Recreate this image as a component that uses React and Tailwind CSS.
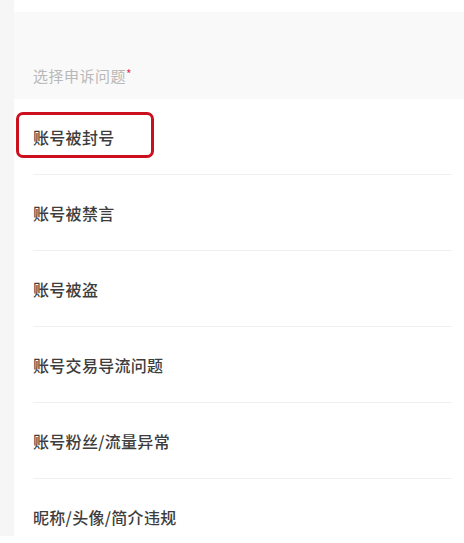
export default function App() {
  const items = [
    "账号被封号",
    "账号被禁言",
    "账号被盗",
    "账号交易导流问题",
    "账号粉丝/流量异常",
    "昵称/头像/简介违规",
  ];
  return (
    <div
      className="w-[464px] h-[543px] overflow-hidden flex bg-white"
      style={{ fontFamily: '"Noto Sans CJK SC", "Noto Sans", sans-serif' }}
    >
      <div className="w-[14px] h-[536px] bg-[#f6f6f6] shrink-0" />
      <div className="flex-1 flex flex-col">
        <div className="h-[12px] shrink-0 bg-white" />
        <div className="h-[87px] shrink-0 bg-[#f9f9f9] pl-[19px] flex items-end pb-[11px]">
          <span className="text-[15px] leading-[22px] text-[#b8b8b8] tracking-[0.5px]">
            选择申诉问题<span className="text-[#e8335a] relative -top-[3px] text-[12px]">*</span>
          </span>
        </div>
        <div className="flex flex-col shrink-0 bg-white">
          {items.map((t, i) => (
            <div key={i} className="relative h-[76px] shrink-0 ml-[19px] mr-[12px] flex items-center border-b border-[#f0f0f0]">
              {i === 0 && (
                <div className="absolute left-[-17px] top-[13px] w-[138px] h-[46px] border-[3px] border-[#cc0f1c] rounded-[7px]" />
              )}
              <span className="text-[16px] leading-[22px] text-[#3d3d3d] font-medium tracking-[0.3px]">{t}</span>
            </div>
          ))}
        </div>
      </div>
    </div>
  );
}
